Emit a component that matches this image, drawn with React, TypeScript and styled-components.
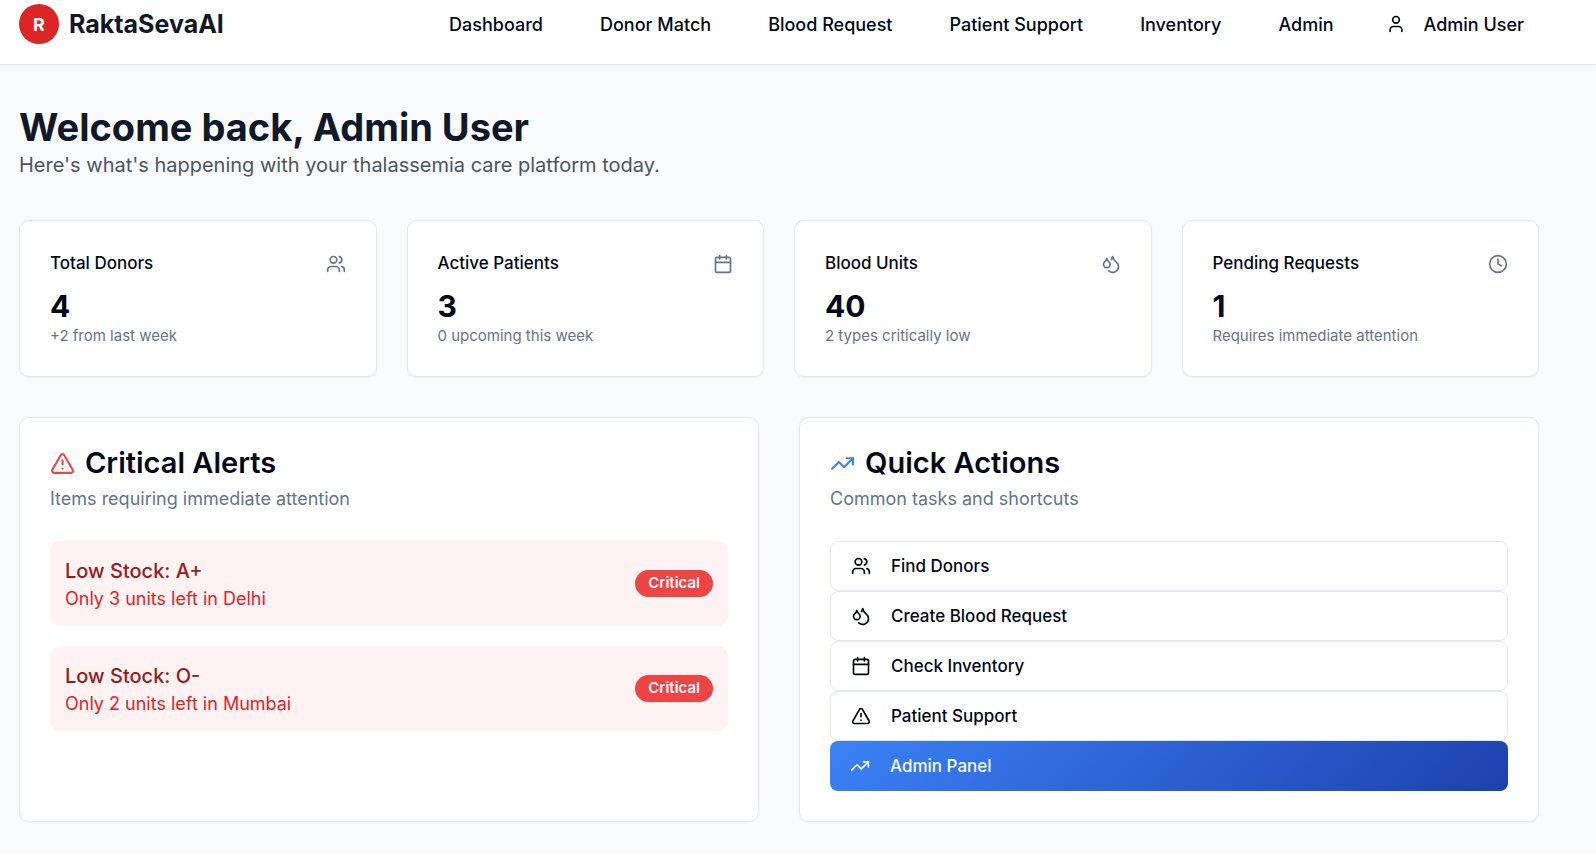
import React from 'react';
import styled, { createGlobalStyle, css } from 'styled-components';
import { Calendar, Clock, Droplets, TrendingUp, TriangleAlert, User, Users } from 'lucide-react';
import type { LucideIcon } from 'lucide-react';

const GlobalStyle = createGlobalStyle`
  *, *::before, *::after { box-sizing: border-box; }
  body {
    margin: 0;
    min-height: 100vh;
    background: #f9fafb;
    color: #020817;
    font-family: Inter, "Liberation Sans", sans-serif;
    font-size: 20px;
    line-height: 30px;
  }
  h1, h2, h3, p { margin: 0; }
  svg { flex-shrink: 0; }
`;

const Header = styled.header`
  display: flex;
  align-items: center;
  justify-content: space-between;
  padding: 4px 57px 20px 19px;
  background: #ffffff;
  border-bottom: 1px solid #e2e8f0;
  box-shadow: 0 1px 2px rgba(0, 0, 0, 0.05);
`;

const Brand = styled.a`
  display: flex;
  align-items: center;
  gap: 10px;
  color: #111827;
  font-size: 25px;
  font-weight: 700;
  line-height: 35px;
  text-decoration: none;
`;

const BrandMark = styled.span`
  display: flex;
  align-items: center;
  justify-content: center;
  width: 40px;
  height: 40px;
  border-radius: 50%;
  background: #dc2626;
  color: #ffffff;
  font-size: 18px;
  line-height: 25px;
`;

const Nav = styled.nav`
  display: flex;
  align-items: center;
  gap: 17px;
`;

const NavLink = styled.a`
  padding: 0 20px;
  color: #020817;
  font-size: 18px;
  font-weight: 500;
  line-height: 25px;
  text-decoration: none;
  white-space: nowrap;
`;

const UserButton = styled.button`
  display: flex;
  align-items: center;
  gap: 18px;
  padding: 0 15px;
  border: 0;
  background: transparent;
  color: #020817;
  font: inherit;
  font-size: 18px;
  font-weight: 500;
  line-height: 25px;
  white-space: nowrap;
  cursor: pointer;
`;

const Main = styled.main`
  padding: 40px 57px 32px 19px;
`;

const PageHead = styled.div`
  margin-bottom: 40px;
`;

const PageTitle = styled.h1`
  color: #111827;
  font-size: 38px;
  font-weight: 700;
  line-height: 45px;
`;

const PageSubtitle = styled.p`
  color: #4b5563;
`;

const StatGrid = styled.section`
  display: grid;
  grid-template-columns: repeat(4, 1fr);
  gap: 30px;
  margin-bottom: 40px;
`;

const PanelGrid = styled.div`
  display: grid;
  grid-template-columns: repeat(2, 1fr);
  gap: 40px;
`;

const Card = styled.section`
  padding: 30px;
  border: 1px solid #e2e8f0;
  border-radius: 10px;
  background: #ffffff;
  box-shadow: 0 1px 2px rgba(0, 0, 0, 0.05);
`;

const StatHead = styled.div`
  display: flex;
  align-items: center;
  justify-content: space-between;
  margin-bottom: 10px;
  color: #64748b;
`;

const StatTitle = styled.h3`
  color: #020817;
  font-size: 17px;
  font-weight: 500;
  line-height: 25px;
`;

const StatValue = styled.div`
  font-size: 30px;
  font-weight: 700;
  line-height: 40px;
`;

const StatNote = styled.p`
  color: #64748b;
  font-size: 15px;
  line-height: 20px;
`;

const PanelHead = styled.div`
  display: flex;
  flex-direction: column;
  gap: 8px;
  margin-bottom: 30px;
`;

const PanelTitle = styled.h2<{ $accent: string }>`
  display: flex;
  align-items: center;
  gap: 10px;
  font-size: 29px;
  font-weight: 600;
  line-height: 30px;

  svg { color: ${({ $accent }) => $accent}; }
`;

const PanelNote = styled.p`
  color: #64748b;
  font-size: 18px;
  line-height: 25px;
`;

const AlertList = styled.div`
  display: flex;
  flex-direction: column;
  gap: 20px;
`;

const Alert = styled.div`
  display: flex;
  align-items: center;
  justify-content: space-between;
  padding: 15px;
  border-radius: 10px;
  background: #fef2f2;
`;

const AlertTitle = styled.p`
  color: #991b1b;
  font-weight: 500;
`;

const AlertText = styled.p`
  color: #dc2626;
  font-size: 18px;
  line-height: 25px;
`;

const Badge = styled.span`
  padding: 3px 13px 4px;
  border-radius: 14px;
  background: #ef4444;
  color: #f8fafc;
  font-size: 15px;
  font-weight: 600;
  line-height: 20px;
`;

const ActionList = styled.div`
  display: flex;
  flex-direction: column;
`;

const ActionButton = styled.button<{ $primary?: boolean }>`
  display: flex;
  align-items: center;
  gap: 20px;
  height: 50px;
  padding: 0 20px;
  border: 1px solid #e2e8f0;
  border-radius: 8px;
  background: #ffffff;
  color: #020817;
  font: inherit;
  font-size: 17px;
  font-weight: 500;
  line-height: 25px;
  cursor: pointer;

  ${({ $primary }) =>
    $primary &&
    css`
      border: 0;
      background: linear-gradient(135deg, #3b82f6, #1e40af);
      color: #f8fafc;
    `}
`;

const navItems = ['Dashboard', 'Donor Match', 'Blood Request', 'Patient Support', 'Inventory', 'Admin'];

const stats: { title: string; value: number; note: string; icon: LucideIcon }[] = [
  { title: 'Total Donors', value: 4, note: '+2 from last week', icon: Users },
  { title: 'Active Patients', value: 3, note: '0 upcoming this week', icon: Calendar },
  { title: 'Blood Units', value: 40, note: '2 types critically low', icon: Droplets },
  { title: 'Pending Requests', value: 1, note: 'Requires immediate attention', icon: Clock },
];

const alerts = [
  { title: 'Low Stock: A+', text: 'Only 3 units left in Delhi' },
  { title: 'Low Stock: O-', text: 'Only 2 units left in Mumbai' },
];

const actions: { label: string; icon: LucideIcon; primary?: boolean }[] = [
  { label: 'Find Donors', icon: Users },
  { label: 'Create Blood Request', icon: Droplets },
  { label: 'Check Inventory', icon: Calendar },
  { label: 'Patient Support', icon: TriangleAlert },
  { label: 'Admin Panel', icon: TrendingUp, primary: true },
];

export default function App() {
  return (
    <>
      <GlobalStyle />
      <Header>
        <Brand href="#">
          <BrandMark>R</BrandMark>
          RaktaSevaAI
        </Brand>
        <Nav>
          {navItems.map((item) => (
            <NavLink key={item} href="#">{item}</NavLink>
          ))}
          <UserButton type="button">
            <User size={20} />
            Admin User
          </UserButton>
        </Nav>
      </Header>
      <Main>
        <PageHead>
          <PageTitle>Welcome back, Admin User</PageTitle>
          <PageSubtitle>Here's what's happening with your thalassemia care platform today.</PageSubtitle>
        </PageHead>
        <StatGrid>
          {stats.map(({ title, value, note, icon: Icon }) => (
            <Card key={title}>
              <StatHead>
                <StatTitle>{title}</StatTitle>
                <Icon size={20} />
              </StatHead>
              <StatValue>{value}</StatValue>
              <StatNote>{note}</StatNote>
            </Card>
          ))}
        </StatGrid>
        <PanelGrid>
          <Card>
            <PanelHead>
              <PanelTitle $accent="#ef4444">
                <TriangleAlert size={25} />
                Critical Alerts
              </PanelTitle>
              <PanelNote>Items requiring immediate attention</PanelNote>
            </PanelHead>
            <AlertList>
              {alerts.map(({ title, text }) => (
                <Alert key={title}>
                  <div>
                    <AlertTitle>{title}</AlertTitle>
                    <AlertText>{text}</AlertText>
                  </div>
                  <Badge>Critical</Badge>
                </Alert>
              ))}
            </AlertList>
          </Card>
          <Card>
            <PanelHead>
              <PanelTitle $accent="#3b82f6">
                <TrendingUp size={25} />
                Quick Actions
              </PanelTitle>
              <PanelNote>Common tasks and shortcuts</PanelNote>
            </PanelHead>
            <ActionList>
              {actions.map(({ label, icon: Icon, primary }) => (
                <ActionButton key={label} type="button" $primary={primary}>
                  <Icon size={20} />
                  {label}
                </ActionButton>
              ))}
            </ActionList>
          </Card>
        </PanelGrid>
      </Main>
    </>
  );
}
